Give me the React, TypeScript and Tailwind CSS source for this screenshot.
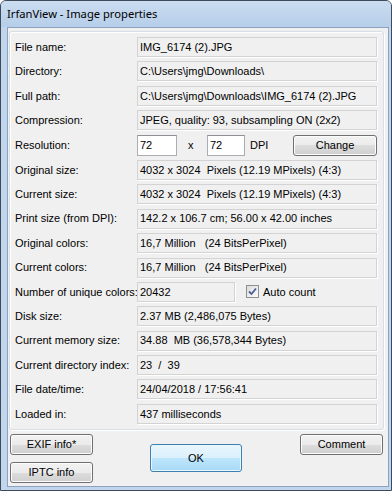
import React from 'react';

const rows: [string, string][] = [
  ['File name:', 'IMG_6174 (2).JPG'],
  ['Directory:', 'C:\\Users\\jmg\\Downloads\\'],
  ['Full path:', 'C:\\Users\\jmg\\Downloads\\IMG_6174 (2).JPG'],
  ['Compression:', 'JPEG, quality: 93, subsampling ON (2x2)'],
];

const rows2: [string, string][] = [
  ['Original size:', '4032 x 3024  Pixels (12.19 MPixels) (4:3)'],
  ['Current size:', '4032 x 3024  Pixels (12.19 MPixels) (4:3)'],
  ['Print size (from DPI):', '142.2 x 106.7 cm; 56.00 x 42.00 inches'],
  ['Original colors:', '16,7 Million   (24 BitsPerPixel)'],
  ['Current colors:', '16,7 Million   (24 BitsPerPixel)'],
];

const rows3: [string, string][] = [
  ['Disk size:', '2.37 MB (2,486,075 Bytes)'],
  ['Current memory size:', '34.88  MB (36,578,344 Bytes)'],
  ['Current directory index:', '23  /  39'],
  ['File date/time:', '24/04/2018 / 17:56:41'],
  ['Loaded in:', '437 milliseconds'],
];

function Field({ text, className = '' }: { text: string; className?: string }) {
  return (
    <div className={`h-full border border-[#d3d3d3] shadow-[1px_1px_0_#ffffff] bg-[#f0f0f0] flex items-center pl-[2px] whitespace-pre ${className}`}>
      {text}
    </div>
  );
}

function Row({ label, value }: { label: string; value: string }) {
  return (
    <div className="flex items-center h-[20px]">
      <div className="w-[122px] shrink-0 whitespace-nowrap">{label}</div>
      <Field text={value} className="flex-1" />
    </div>
  );
}

function Button({ children, className = '' }: { children: React.ReactNode; className?: string }) {
  return (
    <div
      className={`h-[21px] flex items-center justify-center border border-[#707070] rounded-[3px] bg-[linear-gradient(#f2f2f2,#ebebeb_50%,#dddddd_50%,#cfcfcf)] shadow-[inset_0_0_0_1px_#fcfcfc] ${className}`}
    >
      {children}
    </div>
  );
}

export default function App() {
  return (
    <div className="w-[392px] h-[491px] flex flex-col bg-[#c1d5ec] border border-[#3d4a5a] rounded-t-[6px] overflow-hidden text-black">
      <div className="h-[26px] shrink-0 flex items-center pl-[6px] bg-[linear-gradient(#cbdcf0,#b6cee9)] text-[11.2px] font-['Noto_Sans',sans-serif] text-[#000]">
        IrfanView - Image properties
      </div>
      <div className="flex-1 ml-[6px] mr-[2px] mb-[3px] border border-[#8ca3c0] bg-[#f0f0f0] pl-[1px] pt-[3px] pr-[4px] font-['Liberation_Sans',Arial,sans-serif] text-[11px]">
        <div className="border border-[#d5dfe5] rounded-[3px] shadow-[inset_1px_1px_0_#ffffff,1px_1px_0_#ffffff] pl-[5px] pr-[6px] pt-[5px] pb-[5px] flex flex-col gap-[4.4px]">
          {rows.map(([l, v]) => (
            <Row key={l} label={l} value={v} />
          ))}
          <div className="flex items-center h-[21px]">
            <div className="w-[122px] shrink-0">Resolution:</div>
            <div className="w-[40px] h-full bg-white border border-[#abadb3] border-t-[#8f9196] flex items-center pl-[2px]">72</div>
            <div className="ml-[11px] w-[19px]">x</div>
            <div className="w-[38px] h-full bg-white border border-[#abadb3] border-t-[#8f9196] flex items-center pl-[2px]">72</div>
            <div className="ml-[5px]">DPI</div>
            <Button className="ml-auto w-[84px]">Change</Button>
          </div>
          {rows2.map(([l, v]) => (
            <Row key={l} label={l} value={v} />
          ))}
          <div className="flex items-center h-[20px]">
            <div className="w-[122px] shrink-0 whitespace-nowrap">Number of unique colors:</div>
            <Field text="20432" className="w-[98px]" />
            <div className="ml-[11px] w-[13px] h-[13px] border border-[#8f8f8f] bg-[linear-gradient(135deg,#dcdcdc,#fbfbfb)] flex items-center justify-center">
              <svg width="9" height="9" viewBox="0 0 9 9">
                <path d="M1 4.5 L3.5 7 L8 1.5" fill="none" stroke="#4a5f97" strokeWidth="1.8" />
              </svg>
            </div>
            <div className="ml-[4px]">Auto count</div>
          </div>
          {rows3.map(([l, v]) => (
            <Row key={l} label={l} value={v} />
          ))}
        </div>
        <div className="flex items-start mt-[4px] pl-[1px]">
          <div className="flex flex-col gap-[7px] w-[83px]">
            <Button>EXIF info*</Button>
            <Button>IPTC info</Button>
          </div>
          <div className="ml-[57px] mt-[10px] w-[92px] h-[28px] flex items-center justify-center border border-[#3c7fb1] rounded-[3px] bg-[linear-gradient(#eaf6fd,#d9f0fc_50%,#bee6fd_50%,#a7d9f5)] shadow-[inset_0_0_0_1px_#e8f6fd]">
            OK
          </div>
          <Button className="ml-auto mr-[1px] w-[83px]">Comment</Button>
        </div>
      </div>
    </div>
  );
}
